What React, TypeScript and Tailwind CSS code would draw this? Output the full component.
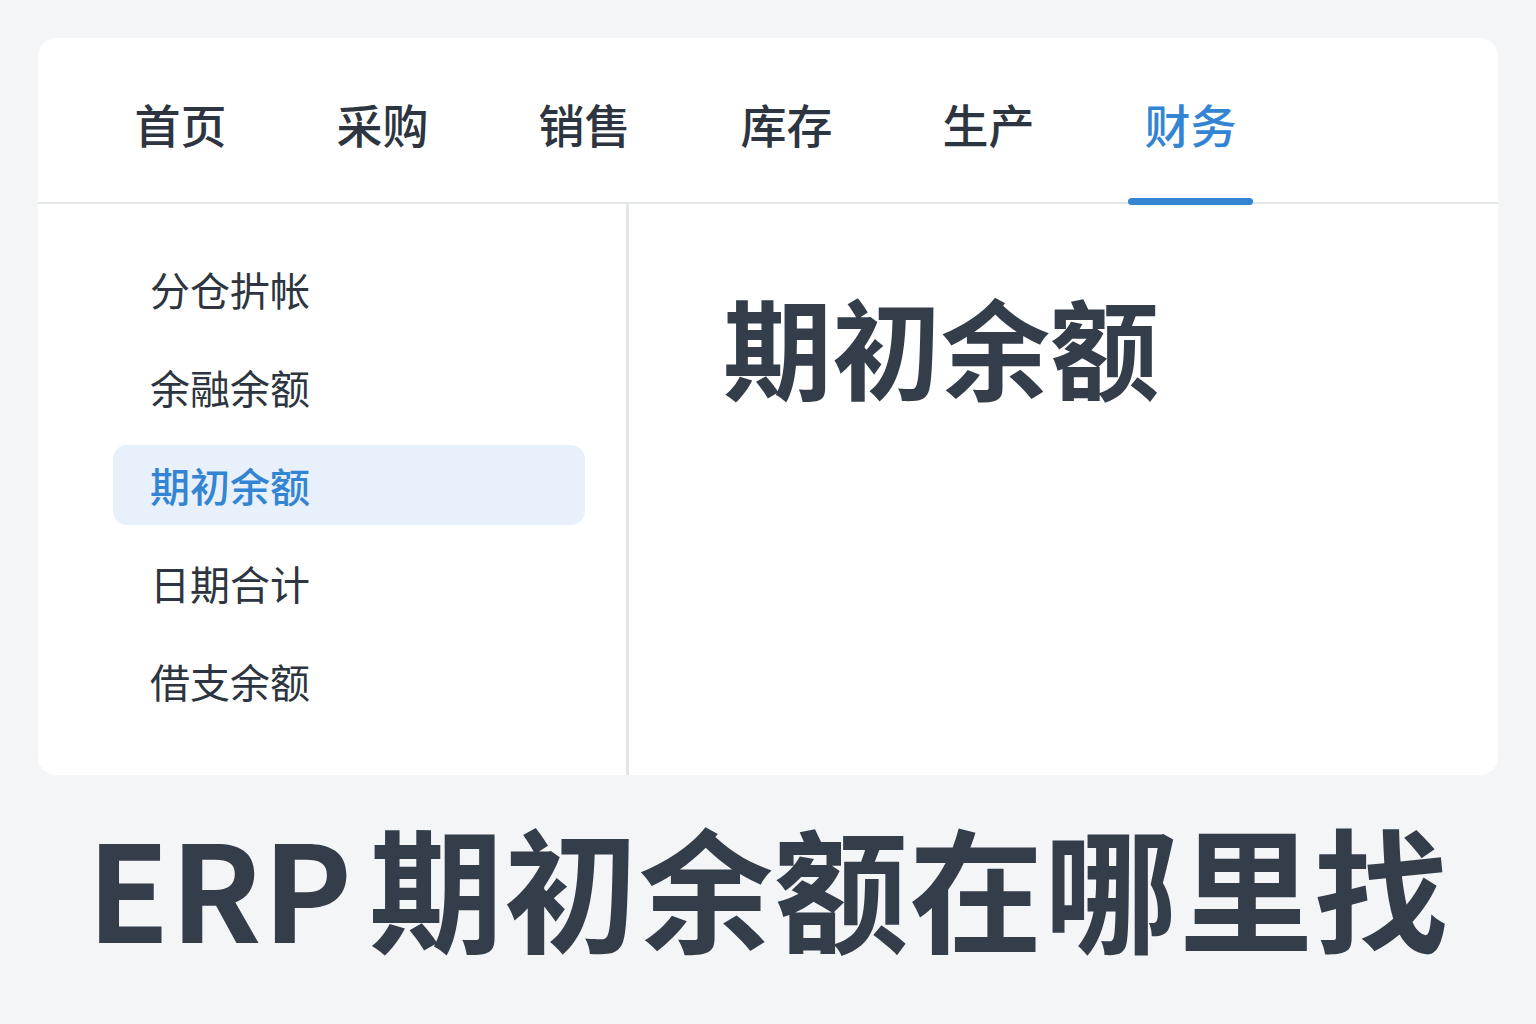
import React, { useState } from "react";

const tabs = ["首页", "采购", "销售", "库存", "生产", "财务"];
const menu = ["分仓扸帐", "余融余额", "期初余额", "日期合计", "借支余额"];

export default function App() {
  const [tab, setTab] = useState(5);
  const [item, setItem] = useState(2);

  return (
    <div
      className="w-[1536px] h-[1024px] bg-[#f4f5f6] flex flex-col overflow-hidden"
      style={{ fontFamily: '"Noto Sans CJK SC", "Noto Sans", sans-serif' }}
    >
      <div className="mx-[38px] mt-[38px] h-[737px] bg-white rounded-[18px] flex flex-col">
        {/* top tabs */}
        <div className="h-[166px] border-b-[2px] border-[#e3e6e9] flex flex-row items-stretch pl-[80px] gap-[77px]">
          {tabs.map((t, i) => (
            <div
              key={t}
              onClick={() => setTab(i)}
              className="relative w-[125px] flex items-center justify-center cursor-pointer"
            >
              <span
                className={`text-[46px] leading-none font-medium mt-[5px] ${
                  tab === i ? "text-[#3484d4]" : "text-[#2d3540]"
                }`}
              >
                {t}
              </span>
              {tab === i && (
                <div className="absolute left-0 right-0 bottom-[-3px] h-[7px] rounded-full bg-[#3484d4]" />
              )}
            </div>
          ))}
        </div>

        <div className="flex-1 flex flex-row">
          {/* side menu */}
          <div className="w-[591px] border-r-[3px] border-[#e3e6e9] pt-[45px] pl-[75px] pr-[41px] flex flex-col gap-[18px]">
            {menu.map((m, i) => (
              <div
                key={m}
                onClick={() => setItem(i)}
                className={`h-[80px] rounded-[14px] pl-[37px] flex items-center cursor-pointer ${
                  item === i ? "bg-[#e8f1fb]" : ""
                }`}
              >
                <span
                  className={`text-[40px] leading-none ${
                    item === i ? "text-[#3484d4] font-medium" : "text-[#2d3540]"
                  }`}
                >
                  {m}
                </span>
              </div>
            ))}
          </div>

          {/* content */}
          <div className="flex-1 pl-[94px] pt-[86px]">
            <h1 className="text-[109px] leading-none font-bold text-[#343e4b]">
              {menu[item]}
            </h1>
          </div>
        </div>
      </div>

      <div className="flex-1 flex items-center justify-center pb-[30px]">
        <div className="text-[134px] leading-none font-bold text-[#343e4b] tracking-[1px]">
          <span className="mr-[16px]">ERP</span>期初余额在哪里找
        </div>
      </div>
    </div>
  );
}
